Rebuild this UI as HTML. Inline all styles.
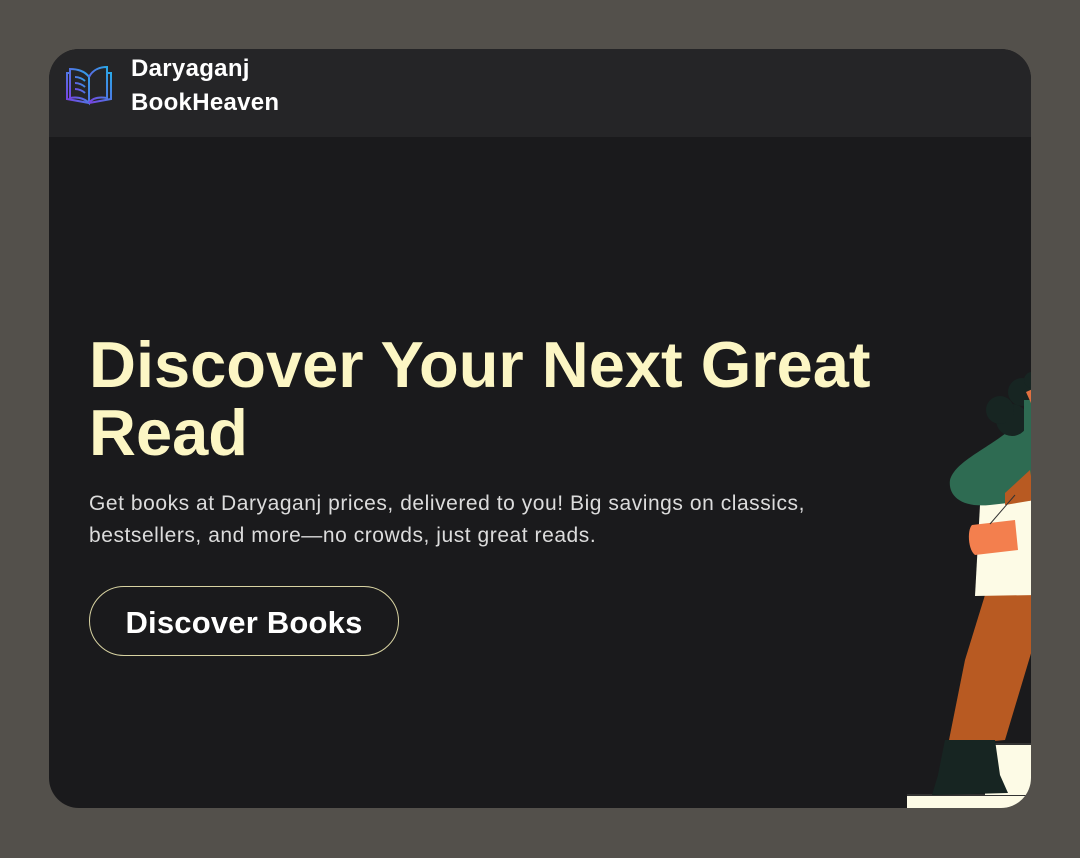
<!DOCTYPE html>
<html><head><style>
body{margin:0;width:1080px;height:858px;background:#53504b;font-family:"Liberation Sans",sans-serif;overflow:hidden;position:relative}
.card{position:absolute;left:49px;top:49px;width:982px;height:759px;border-radius:30px;background:#1a1a1c;overflow:hidden}
.hdr{position:absolute;left:0;top:0;width:982px;height:88px;background:#252527}
.brand{position:absolute;left:82px;top:3px;color:#fff;font-size:24px;line-height:34px;font-weight:bold;letter-spacing:0.3px}
h1{position:absolute;left:40px;top:282px;margin:0;color:#fcf6c4;font-size:65px;line-height:68px;font-weight:bold;width:840px;letter-spacing:0}
p{position:absolute;left:40px;top:439px;margin:0;color:#dcdcdc;font-size:21px;line-height:32px;width:760px;letter-spacing:0.55px}
.btn{position:absolute;left:40px;top:537px;width:308px;height:68px;border:1px solid #d8d3a2;border-radius:35px;color:#fff;font-size:31px;font-weight:bold;text-align:center;line-height:72px;letter-spacing:0.2px}
</style></head><body>
<div class="card">
<div class="hdr">
<svg style="position:absolute;left:16px;top:14px" width="48" height="44" viewBox="0 0 48 44">
<defs><linearGradient id="g" x1="0" y1="1" x2="1" y2="0"><stop offset="0" stop-color="#7a3fe0"/><stop offset="1" stop-color="#2aa8e8"/></linearGradient></defs>
<g fill="none" stroke="url(#g)" stroke-width="2">
<path d="M24 40 L2 36 V10 L6 10"/><path d="M24 40 L46 36 V10 L42 10"/>
<path d="M24 40 C18 34 10 34 5 35 V6 C12 6 20 8 24 14 Z"/>
<path d="M24 40 C28 34 36 34 42 35 V4 C36 4 28 6 24 14"/>
<path d="M10 14 C14 14 18 16 20 18 M10 20 C14 20 18 22 20 24 M10 26 C14 26 18 28 20 30"/>
</g></svg>
<div class="brand">Daryaganj<br>BookHeaven</div>
</div>
<h1>Discover Your Next Great Read</h1>
<p>Get books at Daryaganj prices, delivered to you! Big savings on classics, bestsellers, and more—no crowds, just great reads.</p>
<div class="btn">Discover Books</div>
<svg style="position:absolute;left:0;top:0" width="982" height="759">
<g transform="translate(-49,-49)">
<rect x="907" y="795" width="130" height="20" fill="#fdfbe6"/>
<rect x="907" y="794" width="130" height="2" fill="#333"/>
<rect x="985" y="745" width="50" height="50" fill="#fdfbe6"/>
<rect x="985" y="743" width="50" height="2" fill="#333"/>
<path d="M985 595 L1035 595 L1035 640 L1005 740 L948 745 L965 660 Z" fill="#b85a22"/>
<path d="M945 740 L995 740 L1000 775 L1008 793 L932 795 L938 775 Z" fill="#172522"/>
<path d="M980 505 L1035 500 L1035 595 L975 596 Z" fill="#fdfbe6"/>
<path d="M1010 430 L1035 420 L1035 500 L990 505 C960 508 948 495 950 480 C955 462 985 450 1010 430 Z" fill="#2e6b52"/>
<path d="M1005 493 L1030 470 L1035 500 L1005 505 Z" fill="#b85a22"/>
<path d="M972 525 L1015 520 L1018 550 L975 555 C968 550 967 530 972 525 Z" fill="#f37f4e"/>
<path d="M990 524 L1015 495" stroke="#333" stroke-width="1" fill="none"/>
<circle cx="1012" cy="420" r="16" fill="#172522"/>
<circle cx="1000" cy="410" r="14" fill="#172522"/>
<circle cx="1022" cy="392" r="14" fill="#172522"/>
<circle cx="1032" cy="380" r="8" fill="#172522"/>
<rect x="1024" y="400" width="10" height="40" fill="#2e6b52"/>
<path d="M1026 392 L1035 388 L1035 412 Z" fill="#e07040"/>
</g></svg>
</div>
</body></html>
